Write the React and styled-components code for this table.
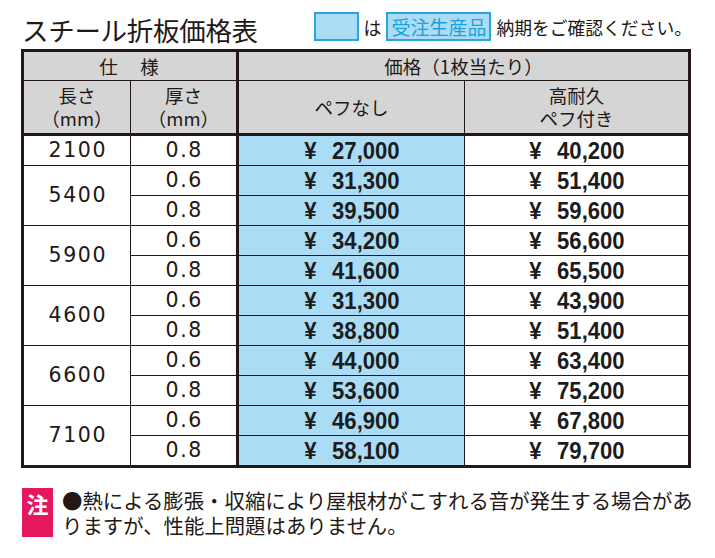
import styled, { createGlobalStyle } from "styled-components";

const Global = createGlobalStyle`
    body {
        margin: 0;
        background: #fff;
        font-family: "Noto Sans CJK JP", "Noto Sans", sans-serif;
        color: #231815;
    }
`;

const Page = styled.div`
    width: 671px;
    padding-left: 21px;
`;

const TopBar = styled.div`
    display: flex;
    justify-content: space-between;
    align-items: flex-start;
    height: 49px;
    padding-top: 12px;
    box-sizing: border-box;
`;

const Title = styled.h1`
    margin: 3px 0 0 1px;
    font-size: 26.5px;
    font-weight: 400;
    line-height: 30px;
    letter-spacing: -0.3px;
`;

const Legend = styled.div`
    display: flex;
    align-items: center;
    gap: 5px;
    font-size: 17.8px;
    height: 29px;
`;

const Swatch = styled.span`
    display: inline-flex;
    align-items: center;
    justify-content: center;
    height: 29px;
    min-width: ${p => p.$w}px;
    box-sizing: border-box;
    padding: 0 3px;
    background: #aadcf5;
    border: 2px solid #2aa6de;
    color: #1fa0da;
    font-size: 19px;
`;

const Grid = styled.div`
    display: grid;
    grid-template-columns: 106px 107px 225px 223px;
    grid-template-rows: 28px 54px repeat(11, 29px);
    gap: 1px;
    width: fit-content;
    background: #231815;
    border: 3px solid #231815;
`;

const tones = {
    head: "#d5d5d5",
    blue: "#aadcf5",
    white: "#fff",
};

const Cell = styled.div`
    display: flex;
    flex-direction: column;
    align-items: center;
    justify-content: center;
    box-sizing: border-box;
    background: ${p => tones[p.$tone || "white"]};
    grid-column: ${p => (p.$cols ? `span ${p.$cols}` : "auto")};
    grid-row: ${p => (p.$rows ? `span ${p.$rows}` : "auto")};
    border-right: ${p => (p.$thick ? "2px solid #231815" : "none")};
    border-bottom: ${p => (p.$under ? "2px solid #231815" : "none")};
`;

const HeadText = styled.div`
    font-size: 18.5px;
    line-height: 23px;
    text-align: center;
    letter-spacing: ${p => p.$spread || 0}px;
`;

const Num = styled.div`
    font-family: "DejaVu Sans", sans-serif;
    font-size: 20.5px;
    letter-spacing: 1.6px;
    padding-left: 1.6px;
    line-height: 1;
`;

const Price = styled.div`
    display: flex;
    align-items: center;
    gap: 17px;
    font-family: "Liberation Sans", Arial, sans-serif;
    font-weight: 700;
    font-size: 24px;
    color: #1c1c1c;
    transform: scaleX(0.92);
    line-height: 1;
`;

const Footer = styled.div`
    display: flex;
    align-items: flex-start;
    gap: 9px;
    margin-top: 20px;
    margin-left: 1px;
`;

const NoteTag = styled.div`
    flex: 0 0 31px;
    height: 49px;
    background: #e5185f;
    color: #fff;
    font-weight: 700;
    font-size: 22px;
    line-height: 1;
    text-align: center;
    padding-top: 4px;
    box-sizing: border-box;
`;

const NoteText = styled.p`
    margin: 0;
    font-size: 20.4px;
    line-height: 25px;
    white-space: nowrap;
`;

const groups = [
    { len: "2100", items: [["0.8", "27,000", "40,200"]] },
    { len: "5400", items: [["0.6", "31,300", "51,400"], ["0.8", "39,500", "59,600"]] },
    { len: "5900", items: [["0.6", "34,200", "56,600"], ["0.8", "41,600", "65,500"]] },
    { len: "4600", items: [["0.6", "31,300", "43,900"], ["0.8", "38,800", "51,400"]] },
    { len: "6600", items: [["0.6", "44,000", "63,400"], ["0.8", "53,600", "75,200"]] },
    { len: "7100", items: [["0.6", "46,900", "67,800"], ["0.8", "58,100", "79,700"]] },
];

const Yen = ({ value }) => (
    <Price>
        <span>¥</span>
        <span>{value}</span>
    </Price>
);

const App = () => {
    return (
        <Page>
            <Global />
            <TopBar>
                <Title>スチール折板価格表</Title>
                <Legend>
                    <Swatch $w={45} />
                    <span>は</span>
                    <Swatch $w={104}>受注生産品</Swatch>
                    <span>納期をご確認ください。</span>
                </Legend>
            </TopBar>

            <Grid>
                <Cell $tone="head" $cols={2} $thick>
                    <HeadText $spread={2}>仕　様</HeadText>
                </Cell>
                <Cell $tone="head" $cols={2}>
                    <HeadText>価格（1枚当たり）</HeadText>
                </Cell>

                <Cell $tone="head" $under>
                    <HeadText>長さ<br />（mm）</HeadText>
                </Cell>
                <Cell $tone="head" $under $thick>
                    <HeadText>厚さ<br />（mm）</HeadText>
                </Cell>
                <Cell $tone="head" $under>
                    <HeadText>ペフなし</HeadText>
                </Cell>
                <Cell $tone="head" $under>
                    <HeadText>高耐久<br />ペフ付き</HeadText>
                </Cell>

                {groups.map(g => [
                    <Cell key={g.len} $rows={g.items.length}>
                        <Num>{g.len}</Num>
                    </Cell>,
                    ...g.items.map(([t, plain, pef], i) => [
                        <Cell key={`${g.len}-${i}-t`} $thick>
                            <Num>{t}</Num>
                        </Cell>,
                        <Cell key={`${g.len}-${i}-a`} $tone="blue">
                            <Yen value={plain} />
                        </Cell>,
                        <Cell key={`${g.len}-${i}-b`}>
                            <Yen value={pef} />
                        </Cell>,
                    ]),
                ])}
            </Grid>

            <Footer>
                <NoteTag>注</NoteTag>
                <NoteText>
                    ●熱による膨張・収縮により屋根材がこすれる音が発生する場合があ
                    <br />
                    りますが、性能上問題はありません。
                </NoteText>
            </Footer>
        </Page>
    );
};

export default App;
